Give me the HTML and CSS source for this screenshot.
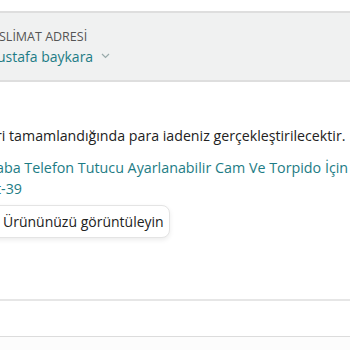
FILE: index.html
```html
<!DOCTYPE html>
<html lang="tr">
<head>
<meta charset="UTF-8" />
<title>Sipariş iade</title>
<link rel="stylesheet" href="styles.css">
</head>
<body>
<div class="address-bar">
  <div class="address-label">SLİMAT ADRESİ</div>
  <div class="address-name">ustafa baykara
    <svg class="chevron" width="9" height="6" viewBox="0 0 9 6" aria-hidden="true"><path d="M1 1l3.5 3.5L8 1" fill="none" stroke="#9aa" stroke-width="1.2"/></svg>
  </div>
</div>

<div class="order">
  <p class="refund-note">ri tamamlandığında para iadeniz gerçekleştirilecektir.</p>
  <a class="product-link" href="#">aba Telefon Tutucu Ayarlanabilir Cam Ve Torpido İçin<br>t-39</a>
  <button class="view-btn">Ürününüzü görüntüleyin</button>
</div>

<div class="divider"></div>
<div class="footer-band"></div>
</body>
</html>
```

FILE: styles.css
```css
*, *::before, *::after {
  box-sizing: border-box;
}
body {
  margin: 0;
  font-family: 'Open Sans', 'Noto Sans', sans-serif;
  background: #fff;
  color: #222;
  overflow: hidden;
  white-space: nowrap;
}
.address-bar {
  margin-top: 11px;
  height: 71px;
  background: #f0f1f1;
  border-top: 2px solid #dedede;
  border-bottom: 2px solid #dedede;
  padding: 15px 0 0 0;
}
.address-label {
  font-size: 12.5px;
  color: #555;
  margin-left: -1px;
  line-height: 18px;
}
.address-name {
  font-size: 14px;
  color: #1d7c85;
  margin-left: -3px;
  line-height: 20px;
  margin-top: 1px;
}
.chevron {
  margin-left: 4px;
  vertical-align: 3px;
}
.order {
  padding-top: 44px;
}
.refund-note {
  margin: 0 0 0 -4px;
  font-size: 14.2px;
  line-height: 20px;
}
.product-link {
  display: block;
  margin: 11px 0 0 -4px;
  font-size: 14.3px;
  line-height: 21px;
  color: #1d7c85;
  text-decoration: none;
}
.view-btn {
  display: block;
  margin: 6px 0 0 -10px;
  padding: 0 5px 0 12px;
  height: 33px;
  font-family: inherit;
  font-size: 14px;
  color: #222;
  background: #fff;
  border: 1px solid #e4e4e4;
  border-radius: 8px;
  box-shadow: 0 2px 5px rgba(0, 0, 0, 0.08);
}
.divider {
  margin-top: 61px;
  height: 2px;
  background: #e6e6e6;
}
.footer-band {
  margin-top: 35px;
  height: 16px;
  border-top: 1px solid #dcdcdc;
  background: #fcfcfc;
}
```
